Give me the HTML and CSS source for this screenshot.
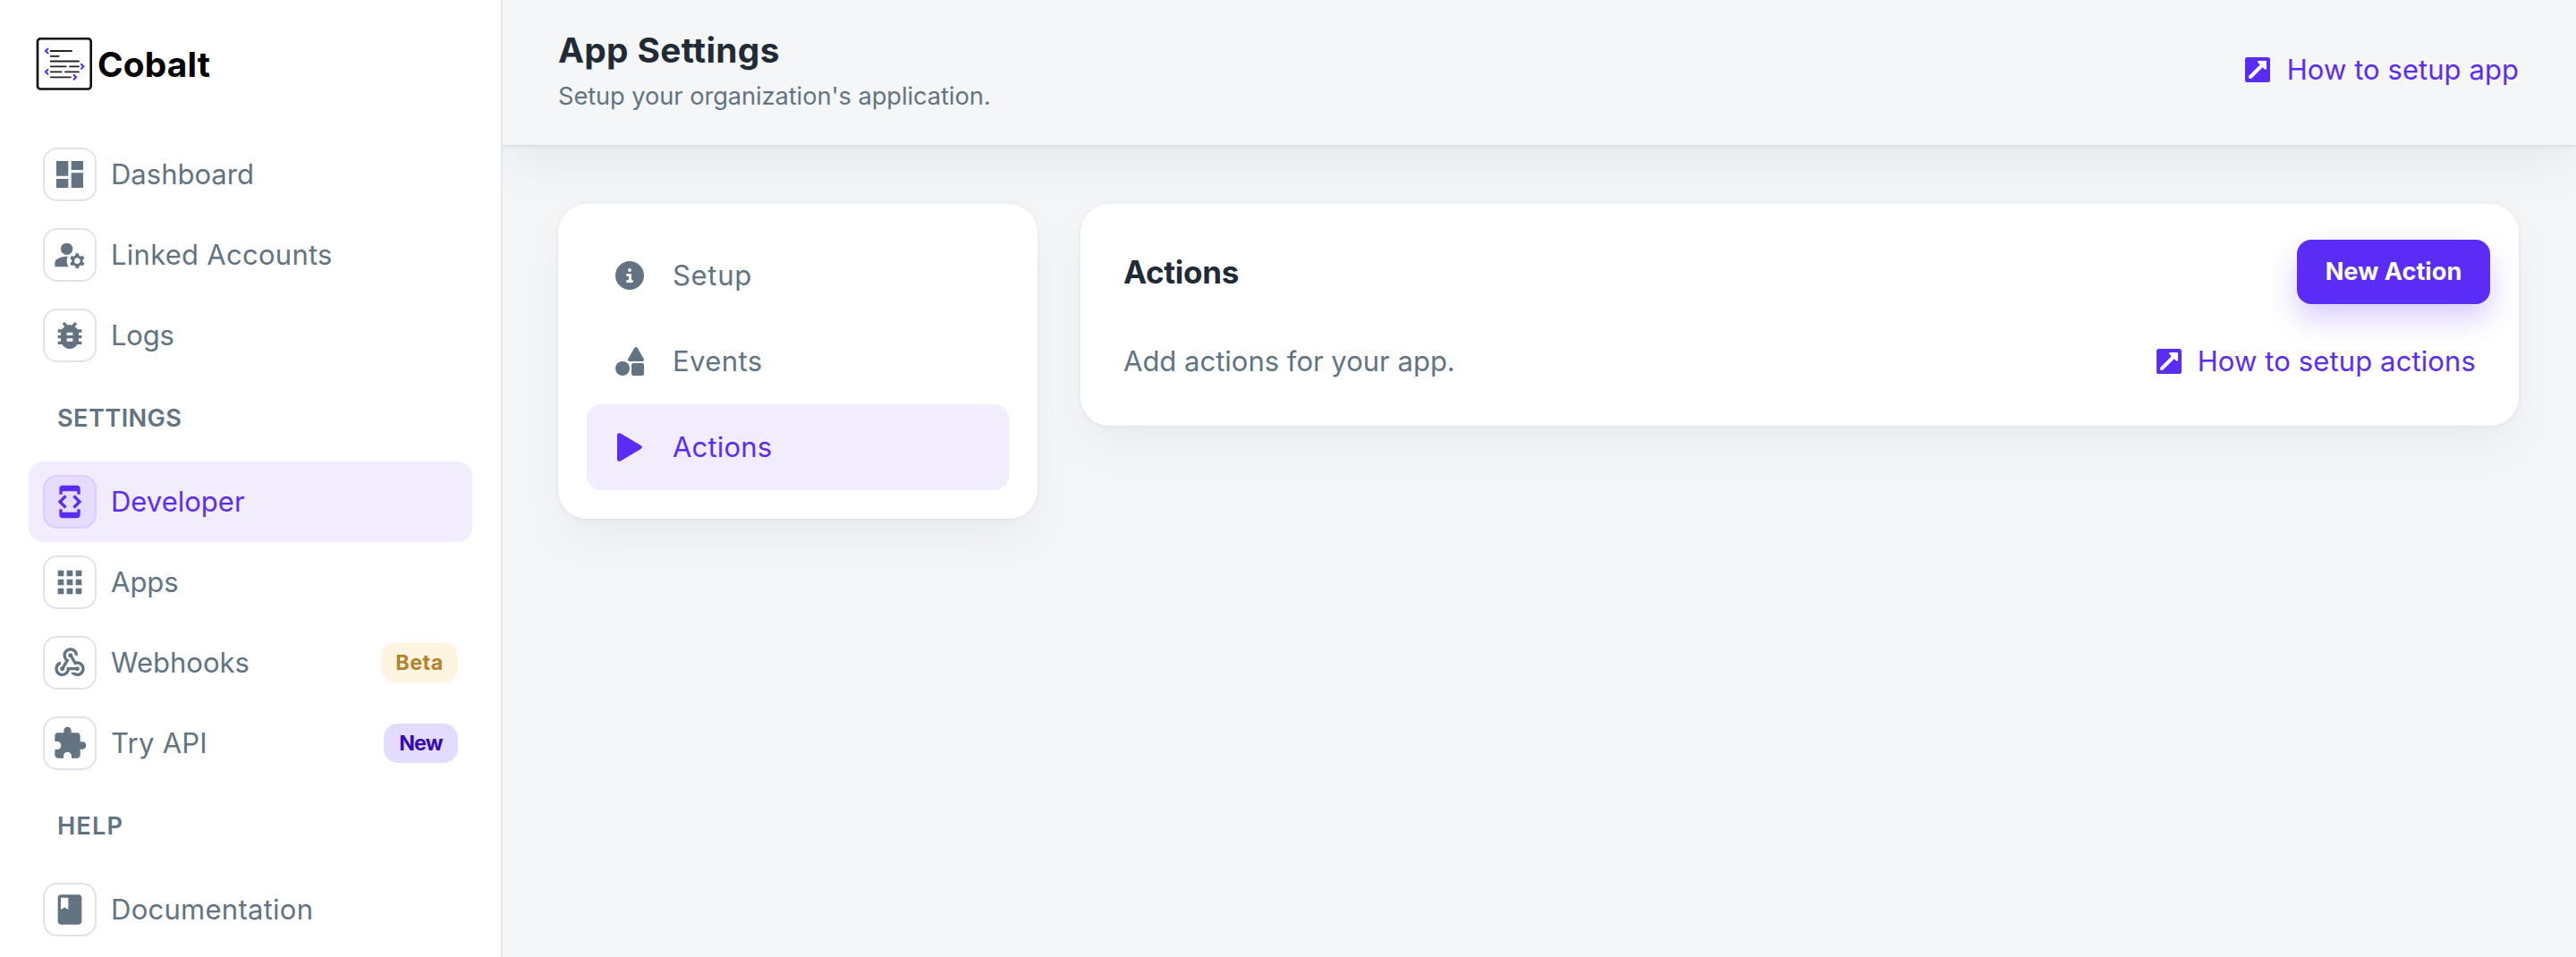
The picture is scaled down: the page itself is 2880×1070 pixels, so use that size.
FILE: index.html
```html
<!DOCTYPE html>
<html lang="en">
<head>
<meta charset="utf-8">
<title>Cobalt</title>
<link rel="stylesheet" href="styles.css">
</head>
<body>
<svg class="defs" aria-hidden="true">
  <symbol id="open" viewBox="0 0 28 28">
    <rect width="28" height="28" rx="2.6" fill="currentColor"/>
    <path d="M6 22L20 8" fill="none" stroke="#fff" stroke-width="4" stroke-linecap="round"/>
    <path d="M15.2 5.1H22.9V12.8Z" fill="#fff" stroke="#fff" stroke-width="2.2" stroke-linejoin="round"/>
  </symbol>
</svg>
<div class="app">
  <aside class="sidebar">
    <div class="brand">
      <svg class="brand-mark" viewBox="12 12 192 180" fill="none" stroke-linecap="round">
        <rect x="18" y="15.500" width="179" height="169" rx="10" stroke="#111" stroke-width="8"/>
        <path d="M62 57H132M62 74.500H89M62 91.500H156M62 109H113M126 109H156M62 127H98M111 127H156M62 145H129" stroke="#222" stroke-width="5.500"/>
        <path d="M52 50L45 57L52 64M165 102L172 109L165 116M52 120L45 127L52 134M140 138L147 145L140 152" stroke="#5b2cf6" stroke-width="6.500"/>
      </svg>
      <span class="brand-name">Cobalt</span>
    </div>
    <nav class="nav">
      <a class="nav-item"><span class="nav-icon"><svg viewBox="0 0 24 24"><path d="M3 13h8V3H3v10zm0 8h8v-6H3v6zm10 0h8V11h-8v10zm0-18v6h8V3h-8z"/></svg></span><span class="nav-label">Dashboard</span></a>
      <a class="nav-item"><span class="nav-icon"><svg viewBox="0 0 24 24"><circle cx="10" cy="8" r="4"/><path d="M10.670 13.020C10.450 13.010 10.230 13 10 13c-2.420 0-4.680.67-6.610 1.820-.88.52-1.390 1.500-1.390 2.530V20h9.260c-.79-1.130-1.260-2.510-1.260-4 0-1.070.25-2.070.67-2.980zM20.750 16c0-.22-.03-.42-.06-.63l1.140-1.010-1-1.730-1.450.49c-.32-.27-.68-.48-1.080-.63L18 11h-2l-.3 1.490c-.4.15-.76.36-1.080.63l-1.450-.49-1 1.730 1.140 1.010c-.03.21-.06.41-.06.63s.03.42.06.63l-1.140 1.010 1 1.730 1.450-.49c.32.27.68.48 1.080.63L16 21h2l.3-1.490c.4-.15.76-.36 1.080-.63l1.450.49 1-1.730-1.140-1.010c.03-.21.06-.41.06-.63zM17 18c-1.100 0-2-.9-2-2s.9-2 2-2 2 .9 2 2-.9 2-2 2z"/></svg></span><span class="nav-label loose">Linked Accounts</span></a>
      <a class="nav-item"><span class="nav-icon"><svg viewBox="0 0 24 24"><path d="M20 8h-2.810c-.45-.78-1.070-1.450-1.820-1.960L17 4.410 15.590 3l-2.170 2.170C12.960 5.060 12.490 5 12 5c-.49 0-.96.06-1.410.17L8.410 3 7 4.410l1.620 1.630C7.880 6.550 7.260 7.220 6.810 8H4v2h2.090c-.05.33-.09.66-.09 1v1H4v2h2v1c0 .34.04.67.09 1H4v2h2.810c1.040 1.790 2.970 3 5.190 3s4.150-1.210 5.190-3H20v-2h-2.090c.05-.33.09-.66.09-1v-1h2v-2h-2v-1c0-.34-.04-.67-.09-1H20V8zm-6 8h-4v-2h4v2zm0-4h-4v-2h4v2z"/></svg></span><span class="nav-label tight">Logs</span></a>
      <h2 class="nav-heading">SETTINGS</h2>
      <a class="nav-item active"><span class="nav-icon"><svg viewBox="0 0 24 24"><path d="M7 5h10v2h2V3c0-1.100-.9-1.990-2-1.990L7 1c-1.100 0-2 .9-2 2v4h2V5zm8.410 11.590L20 12l-4.590-4.590L14 8.830 17.170 12 14 15.170l1.410 1.420zM10 15.170L6.830 12 10 8.830 8.590 7.410 4 12l4.590 4.590L10 15.170zM17 19H7v-2H5v4c0 1.100.9 2 2 2h10c1.100 0 2-.9 2-2v-4h-2v2z"/></svg></span><span class="nav-label">Developer</span></a>
      <a class="nav-item"><span class="nav-icon"><svg viewBox="0 0 24 24"><path d="M4 8h4V4H4v4zm6 12h4v-4h-4v4zm-6 0h4v-4H4v4zm0-6h4v-4H4v4zm6 0h4v-4h-4v4zm6-10v4h4V4h-4zm-6 4h4V4h-4v4zm6 6h4v-4h-4v4zm0 6h4v-4h-4v4z"/></svg></span><span class="nav-label">Apps</span></a>
      <a class="nav-item"><span class="nav-icon"><svg viewBox="0 0 24 24"><path d="M10 15h5.880c.27-.31.67-.5 1.120-.5.83 0 1.500.67 1.500 1.500s-.67 1.500-1.500 1.500c-.44 0-.84-.19-1.120-.5H11.900c-.46 2.280-2.480 4-4.900 4-2.760 0-5-2.240-5-5 0-2.420 1.720-4.440 4-4.900v2.070C4.840 13.580 4 14.700 4 16c0 1.650 1.350 3 3 3s3-1.350 3-3v-1zm2.500-11c1.650 0 3 1.350 3 3h2c0-2.760-2.240-5-5-5s-5 2.240-5 5c0 1.430.6 2.710 1.550 3.620l-2.350 3.900c-.68.14-1.200.75-1.200 1.480 0 .83.67 1.500 1.500 1.500s1.500-.67 1.500-1.500c0-.16-.02-.31-.07-.45l3.380-5.630C10.490 9.610 9.500 8.420 9.500 7c0-1.650 1.350-3 3-3zm4.500 9c-.64 0-1.230.2-1.720.54l-3.050-5.070C11.530 8.350 11 7.740 11 7c0-.83.67-1.500 1.500-1.500S14 6.170 14 7c0 .15-.02.29-.06.43l2.190 3.650c.28-.05.57-.08.87-.08 2.760 0 5 2.240 5 5s-2.240 5-5 5c-1.850 0-3.470-1.010-4.330-2.500h2.670c.48.32 1.050.5 1.660.5 1.650 0 3-1.350 3-3s-1.350-3-3-3z"/></svg></span><span class="nav-label">Webhooks</span><span class="badge badge-beta">Beta</span></a>
      <a class="nav-item"><span class="nav-icon"><svg viewBox="0 0 24 24"><path d="M20.500 11H19V7c0-1.100-.9-2-2-2h-4V3.500C13 2.120 11.880 1 10.500 1S8 2.120 8 3.500V5H4c-1.100 0-1.990.9-1.990 2v3.800H3.500c1.490 0 2.700 1.210 2.700 2.700s-1.210 2.700-2.700 2.700H2V20c0 1.100.9 2 2 2h3.800v-1.500c0-1.490 1.210-2.700 2.700-2.700 1.490 0 2.700 1.210 2.700 2.700V22H17c1.100 0 2-.9 2-2v-4h1.500c1.380 0 2.500-1.120 2.500-2.500S21.880 11 20.500 11z"/></svg></span><span class="nav-label loose">Try API</span><span class="badge badge-new">New</span></a>
      <h2 class="nav-heading wide">HELP</h2>
      <a class="nav-item"><span class="nav-icon"><svg viewBox="0 0 24 24"><path d="M18 2H6c-1.100 0-2 .9-2 2v16c0 1.100.9 2 2 2h12c1.100 0 2-.9 2-2V4c0-1.100-.9-2-2-2zM6 4h5v8l-2.500-1.500L6 12V4z"/></svg></span><span class="nav-label loose">Documentation</span></a>
    </nav>
  </aside>
  <div class="main">
    <header class="topbar">
      <div class="titles">
        <h1 class="title">App Settings</h1>
        <p class="subtitle">Setup your organization's application.</p>
      </div>
      <a class="doc-link"><svg class="doc-icon"><use href="#open"/></svg><span>How to setup app</span></a>
    </header>
    <main class="content">
      <section class="card menu">
        <a class="menu-item"><svg class="menu-icon" viewBox="0 0 512 512"><path d="M256 512A256 256 0 1 0 256 0a256 256 0 1 0 0 512zM216 336h24V272H216c-13.300 0-24-10.700-24-24s10.700-24 24-24h48c13.300 0 24 10.700 24 24v88h8c13.300 0 24 10.700 24 24s-10.700 24-24 24H216c-13.300 0-24-10.700-24-24s10.700-24 24-24zm40-208a32 32 0 1 1 0 64 32 32 0 1 1 0-64z"/></svg><span class="menu-setup">Setup</span></a>
        <a class="menu-item"><svg class="menu-icon" viewBox="0 0 32 32"><circle cx="8" cy="24" r="8"/><rect x="18" y="18" width="14" height="14" rx="2.200"/><path d="M21.300 1Q23 -1 24.700 1L31.700 13Q32.700 16 30 16H16Q13.300 16 14.300 13Z"/></svg><span class="menu-events">Events</span></a>
        <a class="menu-item active"><svg class="menu-icon" viewBox="0 0 32 32"><path d="M2 2.500C2 .3 4.300-.5 6.200.7L28.400 14.100C30.300 15.300 30.300 16.700 28.400 17.900L6.200 31.300C4.300 32.500 2 31.700 2 29.500Z"/></svg><span class="menu-actions">Actions</span></a>
      </section>
      <section class="card panel">
        <div class="panel-head">
          <h2 class="panel-title">Actions</h2>
          <button class="button" type="button">New Action</button>
        </div>
        <div class="panel-body">
          <p class="panel-text">Add actions for your app.</p>
          <a class="doc-link snug"><svg class="doc-icon"><use href="#open"/></svg><span>How to setup actions</span></a>
        </div>
      </section>
    </main>
  </div>
</div>
</body>
</html>
```

FILE: styles.css
```css
* { box-sizing: border-box; }

body {
  margin: 0;
  background: #f4f6f8;
  color: #212b36;
  font: 400 31px/48px Inter, "Liberation Sans", sans-serif;
}

h1, h2, p { margin: 0; }

.defs { display: none; }

.app {
  display: flex;
  height: 1070px;
  overflow: hidden;
}

/* Sidebar */
.sidebar {
  flex: none;
  width: 562px;
  padding: 42px 32px 0;
  background: #fff;
  border-right: 2px solid #e3e7eb;
}

.brand {
  display: flex;
  align-items: center;
  gap: 5px;
  height: 60px;
  margin: 0 0 48px 8px;
}
.brand-mark { width: 64px; height: 60px; }
.brand-name {
  color: #000;
  font-size: 38.8px;
  font-weight: 700;
  letter-spacing: 0.15px;
}

.nav-item {
  display: flex;
  align-items: center;
  gap: 16px;
  height: 90px;
  padding: 0 16px;
  border-radius: 16px;
  color: #637381;
}
.nav-item.active { background: #f1edfd; color: #5b2cf6; }

.nav-icon {
  display: flex;
  align-items: center;
  justify-content: center;
  width: 60px;
  height: 60px;
  border: 2px solid #dfe3e8;
  border-radius: 16px;
}
.nav-icon svg { width: 40px; height: 40px; fill: currentColor; }
.active .nav-icon { background: #e5dcfe; border-color: #dacefd; }

.nav-label.loose { letter-spacing: 0.27px; }
.nav-label.tight { letter-spacing: -0.2px; }

.nav-heading {
  padding-left: 32px;
  color: #637381;
  font-size: 27.2px;
  font-weight: 600;
  line-height: 96px;
  letter-spacing: 0.4px;
}
.nav-heading.wide { letter-spacing: 1.1px; }

.badge {
  height: 44px;
  margin-left: auto;
  border-radius: 16px;
  font-size: 23.3px;
  font-weight: 700;
  line-height: 44px;
  text-align: center;
}
.badge-beta { width: 86px; background: #fef4e0; color: #b2832b; letter-spacing: 0.5px; }
.badge-new { width: 83px; background: #e4dcff; color: #340cb2; letter-spacing: -0.8px; }

/* Header */
.main {
  flex: 1;
  min-width: 0;
  overflow: hidden;
}

.topbar {
  display: flex;
  align-items: center;
  justify-content: space-between;
  height: 164px;
  padding: 26px 64px 32px 62px;
  border-bottom: 2px solid #dfe3e8;
  box-shadow: 0 0 4px rgba(145, 158, 171, 0.2), 0 24px 48px -8px rgba(145, 158, 171, 0.14);
}
.title {
  font-size: 38.8px;
  font-weight: 700;
  line-height: 60px;
  letter-spacing: 0.35px;
}
.subtitle {
  color: #637381;
  font-size: 27.2px;
  line-height: 44px;
  letter-spacing: -0.04px;
}

.doc-link {
  display: flex;
  align-items: center;
  gap: 19px;
  color: #5b2cf6;
  letter-spacing: 0.06px;
}
.doc-link.snug { gap: 18px; letter-spacing: 0.12px; }
.doc-icon { width: 28px; height: 28px; }

/* Content */
.content {
  display: grid;
  grid-template-columns: 536px 1fr;
  align-items: start;
  gap: 48px;
  padding: 64px 64px 0 62px;
}

.card {
  background: #fff;
  border-radius: 32px;
  box-shadow: 0 0 4px rgba(145, 158, 171, 0.2), 0 24px 48px -8px rgba(145, 158, 171, 0.13);
}

.menu { padding: 32px; }
.menu-item {
  display: flex;
  align-items: center;
  gap: 32px;
  height: 96px;
  padding: 0 32px;
  border-radius: 16px;
  color: #637381;
}
.menu-item.active { background: #f1edfd; color: #5b2cf6; }
.menu-icon { width: 32px; height: 32px; fill: currentColor; }
.menu-setup { letter-spacing: 0.7px; }
.menu-events { letter-spacing: 0.4px; }
.menu-actions { letter-spacing: 0.2px; }

.panel { padding: 40px 48px 48px; }
.panel-head {
  display: flex;
  align-items: center;
  justify-content: space-between;
  margin: 0 -16px 40px 0;
}
.panel-title {
  font-size: 35px;
  font-weight: 700;
  letter-spacing: -0.3px;
}
.button {
  width: 216px;
  height: 72px;
  padding: 0;
  border: 0;
  border-radius: 16px;
  background: #5b2cf6;
  box-shadow: 0 16px 32px rgba(91, 44, 246, 0.24);
  color: #fff;
  font: inherit;
  font-size: 27.2px;
  font-weight: 700;
}
.panel-body {
  display: flex;
  align-items: center;
  justify-content: space-between;
}
.panel-text { color: #637381; }
```
